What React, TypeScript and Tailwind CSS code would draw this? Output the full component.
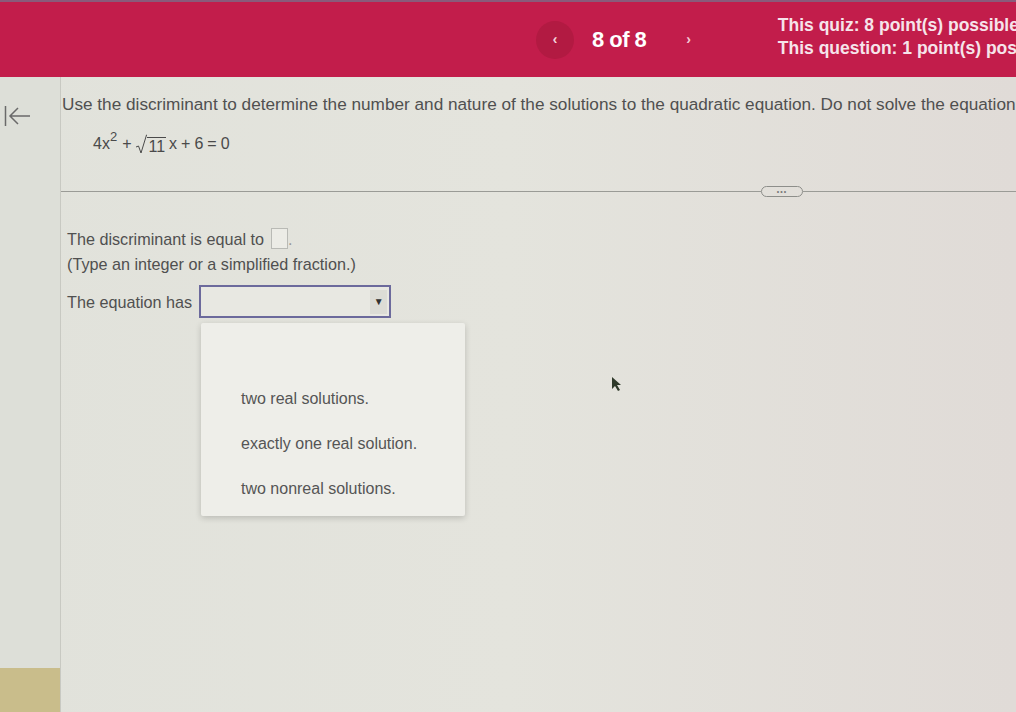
import React from 'react';

const font = { fontFamily: '"Liberation Sans", Arial, sans-serif' };

const Header: React.FC = () => {
  return (
    <header className="h-[77px] bg-[#c21d4b] border-t-2 border-[#8a5a7a] flex items-center overflow-hidden shrink-0 whitespace-nowrap">
      <div className="w-[536px] shrink-0" />
      <div className="flex items-center shrink-0">
        <div className="w-[38px] h-[38px] rounded-full bg-[#b21a42] flex items-center justify-center text-[#f3d3dc] text-[14px] font-bold">
          ‹
        </div>
        <span className="ml-[18px] text-white text-[22px] font-bold tracking-tight">8 of 8</span>
        <span className="ml-[40px] text-[#f3c9d4] text-[14px] font-bold">›</span>
      </div>
      <div className="ml-[87px] shrink-0 flex flex-col leading-[23px] text-[#f6e4ea] text-[17.5px] font-bold -mt-[6px]">
        <span>This quiz: 8 point(s) possible</span>
        <span>This question: 1 point(s) possible</span>
      </div>
    </header>
  );
};

const Equation: React.FC = () => (
  <div className="flex items-end text-[16px] text-[#4a4a4a] pl-[32px] mt-[14px]">
    <span>4x</span>
    <span className="text-[13px] relative -top-[9px]">2</span>
    <span className="mx-[5px]">+</span>
    <span className="flex items-end">
      <svg width="11" height="21" viewBox="0 0 11 21" className="mb-[1px]">
        <path d="M0 13 L2.5 12 L5 19 L10.5 1 L11 1" fill="none" stroke="#4a4a4a" strokeWidth="1" />
      </svg>
      <span className="border-t border-[#4a4a4a] leading-[18px] px-[1px]">11</span>
    </span>
    <span className="ml-[3px]">x</span>
    <span className="mx-[4px]">+</span>
    <span>6</span>
    <span className="mx-[4px]">=</span>
    <span>0</span>
  </div>
);

const App: React.FC = () => {
  return (
    <div
      className="w-[1016px] h-[712px] overflow-hidden flex flex-col bg-linear-to-r from-[#e1e2db] via-[#e4e4dd] to-[#e0dbd7]"
      style={font}
    >
      <Header />
      <div className="flex flex-1 min-h-0">
        {/* left rail */}
        <div className="w-[61px] shrink-0 border-r border-[#c8c9c2] bg-[#dddfd8] flex flex-col justify-between">
          <div className="pt-[28px] pl-[4px]">
            <svg width="28" height="22" viewBox="0 0 28 22">
              <path d="M1.5 1 L1.5 21" stroke="#6a6a6a" strokeWidth="1.5" />
              <path d="M26 11 L6 11 M14 3 L6 11 L14 19" fill="none" stroke="#6a6a6a" strokeWidth="1.5" />
            </svg>
          </div>
          <div className="h-[44px] bg-[#c9bd8b]" />
        </div>

        {/* main */}
        <div className="flex-1 min-w-0 flex flex-col overflow-hidden">
          <p className="pl-[1px] mt-[15px] text-[17.2px] text-[#505050] whitespace-nowrap">
            Use the discriminant to determine the number and nature of the solutions to the quadratic equation. Do not solve the equation.
          </p>
          <Equation />

          <div className="mt-[30px] flex items-center">
            <div className="w-[700px] h-px bg-[#9a9b96]" />
            <div className="w-[42px] h-[11px] rounded-full border border-[#8d8e8a] flex items-center justify-center text-[7px] leading-none text-[#777] tracking-[1px]">
              •••
            </div>
            <div className="flex-1 h-px bg-[#9a9b96]" />
          </div>

          <div className="pl-[6px] mt-[30px] text-[16.2px] text-[#505050]">
            <div className="flex items-center">
              <span>The discriminant is equal to</span>
              <span className="ml-[7px] w-[17px] h-[21px] border border-[#b9bab5] bg-[#ecece6] inline-block" />
              <span className="text-[#999]">.</span>
            </div>
            <div className="mt-[1px]">(Type an integer or a simplified fraction.)</div>

            <div className="mt-[9px] flex items-center">
              <span>The equation has</span>
              <div className="ml-[7px] w-[192px] h-[33px] border-2 border-[#6c6a9c] bg-[#e8e8e2] flex items-center justify-end pr-[2px]">
                <div className="w-[17px] h-[24px] bg-[#dcdcd6] flex items-center justify-center text-[10px] text-[#333]">▼</div>
              </div>
            </div>

            <div className="ml-[134px] mt-[5px] w-[264px] h-[193px] bg-[#eeeee9] rounded-[2px] shadow-[0_2px_6px_rgba(0,0,0,0.18)] flex flex-col pl-[40px] pt-[67px] gap-[27px] text-[16px] leading-[18px] text-[#555]">
              <span>two real solutions.</span>
              <span>exactly one real solution.</span>
              <span>two nonreal solutions.</span>
            </div>
          </div>
        </div>
      </div>

      {/* mouse pointer over the page */}
      <svg className="absolute left-[611px] top-[376px]" width="12" height="16" viewBox="0 0 12 16">
        <path d="M1 1 L1 13 L4 10 L7 15 L9 14 L6 9 L10 9 Z" fill="#2f3a2a" />
      </svg>
    </div>
  );
};

export default App;
